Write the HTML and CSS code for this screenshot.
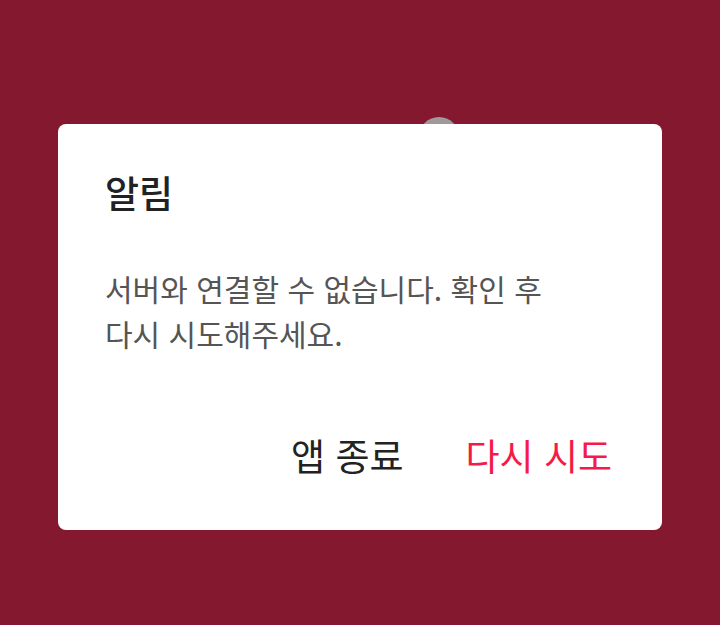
FILE: index.html
```html
<!DOCTYPE html>
<html lang="ko">
  <head>
    <meta charset="UTF-8" />
    <meta name="viewport" content="width=device-width, initial-scale=1.0" />
    <title>알림</title>
    <link rel="stylesheet" href="styles.css">
  </head>
  <body>
    <div class="screen">
      <div class="logo"></div>
      <div class="dialog">
        <h2 class="dialog-title">알림</h2>
        <p class="dialog-message">서버와 연결할 수 없습니다. 확인 후<br />다시 시도해주세요.</p>
        <div class="dialog-actions">
          <button type="button" class="action-button">앱 종료</button>
          <button type="button" class="action-button retry">다시 시도</button>
        </div>
      </div>
    </div>
  </body>
</html>
```

FILE: styles.css
```css
/* Dialog */
body {
  margin: 0;
  font-family: "Noto Sans CJK KR", "Noto Sans", sans-serif;
  background: #84182f;
}

.screen {
  position: relative;
  height: 625px;
  padding: 124px 58px 0;
  box-sizing: border-box;
}

.logo {
  position: absolute;
  left: 419px;
  top: 117px;
  width: 40px;
  height: 40px;
  border-radius: 50%;
  background: linear-gradient(to bottom, #a09a9c, #8c9292);
}

.dialog {
  position: relative;
  background: #fff;
  border-radius: 8px;
  height: 406px;
  padding: 43px 50px 0 47px;
  box-sizing: border-box;
}

.dialog-title {
  margin: 0;
  font-size: 37px;
  font-weight: 500;
  line-height: 50px;
  color: #222;
}

.dialog-message {
  margin: 49px 0 0;
  font-size: 30px;
  line-height: 45px;
  color: #555;
}

.dialog-actions {
  display: flex;
  justify-content: flex-end;
  gap: 62px;
  margin-top: 74px;
}

.action-button {
  padding: 0;
  border: none;
  background: none;
  font-family: inherit;
  font-size: 37px;
  line-height: 50px;
  color: #222;
  cursor: pointer;
}

.action-button.retry {
  color: #f51a47;
}
```
